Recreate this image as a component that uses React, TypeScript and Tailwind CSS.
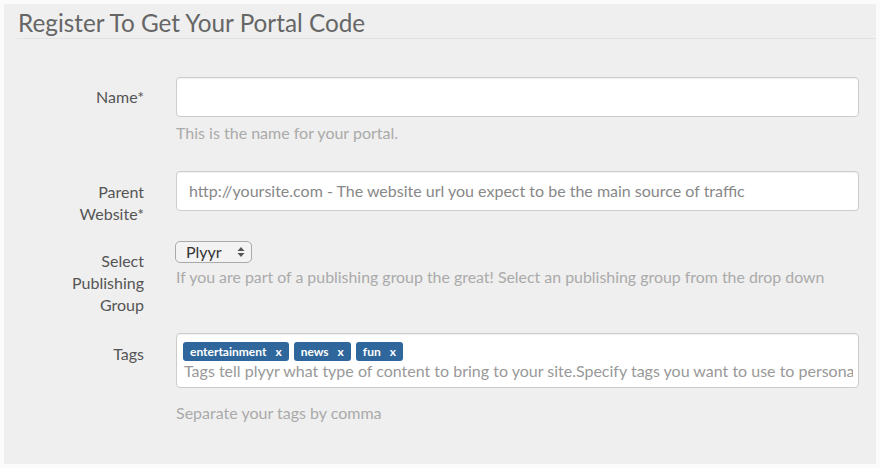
export default function App() {
  const tags = ["entertainment", "news", "fun"];

  return (
    <div className="h-[468px] w-[880px] overflow-hidden bg-[#fcfbfb] p-1 font-['Lato',sans-serif]">
      <div className="h-[460px] w-[872px] bg-[#efefef]">
        <div className="ml-[13px] border-b border-[#e2e2e2] pb-[1px] pl-[1px] pt-[5px]">
          <h1 className="text-[24.3px] leading-[28px] text-[#666]">
            Register To Get Your Portal Code
          </h1>
        </div>

        <div className="mt-[38px]">
          {/* name */}
          <div className="flex items-start">
            <label className="w-[140px] pt-[9px] text-right text-[16px] leading-[22px] text-[#555]">
              Name*
            </label>
            <div className="ml-8 w-[683px]">
              <div className="h-10 rounded-[4px] border border-[#ccc] bg-white shadow-[inset_0_1px_1px_rgba(0,0,0,0.06)]" />
              <p className="mt-[5px] text-[16px] leading-[22px] text-[#aaa]">
                This is the name for your portal.
              </p>
            </div>
          </div>

          {/* parent website */}
          <div className="mt-[27px] flex items-start">
            <label className="w-[140px] pt-[10px] text-right text-[16px] leading-[22px] text-[#555]">
              Parent
              <br />
              Website*
            </label>
            <div className="ml-8 w-[683px]">
              <div className="flex h-10 items-center rounded-[4px] border border-[#ccc] bg-white px-3 text-[16px] text-[#888] shadow-[inset_0_1px_1px_rgba(0,0,0,0.06)]">
                http://yoursite.com - The website url you expect to be the main source of traffic
              </div>
            </div>
          </div>

          {/* publishing group */}
          <div className="mt-4 flex items-start">
            <label className="w-[140px] pt-[9px] text-right text-[16px] leading-[22px] text-[#555]">
              Select
              <br />
              Publishing
              <br />
              Group
            </label>
            <div className="ml-8 w-[683px]">
              <div className="-ml-px flex h-[22px] w-[77px] items-center justify-between rounded-[5px] border border-[#a9a9a9] bg-[#f3f3f3] pl-[10px] pr-[6px] text-[16px] leading-none text-[#333]">
                <span>Plyyr</span>
                <svg width="8" height="12" viewBox="0 0 8 12">
                  <path d="M4 1 L7.5 5 H0.5 Z" fill="#555" />
                  <path d="M4 11 L7.5 7 H0.5 Z" fill="#555" />
                </svg>
              </div>
              <p className="mt-[3px] text-[15.9px] leading-[22px] text-[#aaa]">
                If you are part of a publishing group the great! Select an publishing group from the drop down
              </p>
            </div>
          </div>

          {/* tags */}
          <div className="mt-[17px] flex items-start">
            <label className="w-[140px] pt-[10px] text-right text-[16px] leading-[22px] text-[#555]">
              Tags
            </label>
            <div className="ml-8 w-[683px]">
              <div className="rounded-[4px] border border-[#ccc] bg-white pb-[6px] pl-[6px] pr-[5px] pt-2 shadow-[inset_0_1px_1px_rgba(0,0,0,0.06)]">
                <div className="flex h-[19px] gap-[5px]">
                  {tags.map((t) => (
                    <span
                      key={t}
                      className="flex items-center gap-[9px] rounded-[3px] bg-[#2f679c] px-[7px] text-[12px] font-bold leading-none text-white"
                    >
                      {t}
                      <span>x</span>
                    </span>
                  ))}
                </div>
                <div className="overflow-hidden whitespace-nowrap pl-px text-[16px] leading-[20px] text-[#999]">
                  Tags tell plyyr what type of content to bring to your site.Specify tags you want to use to personalize
                </div>
              </div>
              <p className="mt-[14px] text-[16px] leading-[22px] text-[#aaa]">
                Separate your tags by comma
              </p>
            </div>
          </div>
        </div>
      </div>
    </div>
  );
}
